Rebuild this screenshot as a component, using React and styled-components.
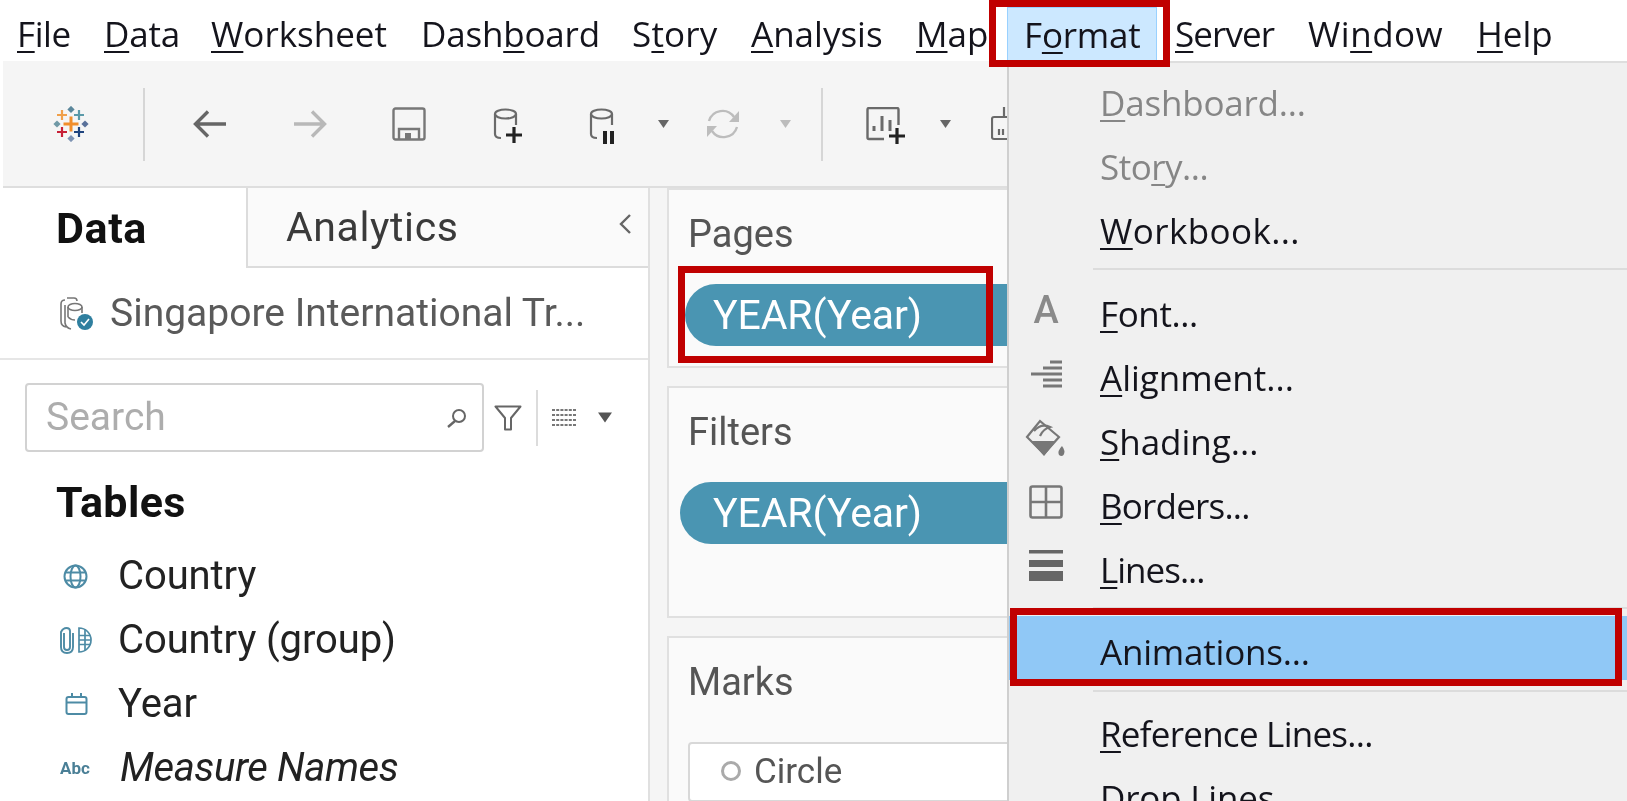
import React from "react";
import styled, { createGlobalStyle } from "styled-components";

const Global = createGlobalStyle`
  html, body { margin: 0; padding: 0; background: #fff; }
  body { font-family: Roboto, "Liberation Sans", sans-serif; }
`;

const UI = `"Open Sans", "Noto Sans", sans-serif`;
const BOOK = `Roboto, "Liberation Sans", sans-serif`;

const Page = styled.div`
  position: relative; width: 1627px; height: 801px; overflow: hidden; background: #fff;
  filter: blur(0.5px);
`;
const MenuBar = styled.div`
  display: flex; height: 61px; padding-left: 17px; align-items: flex-start;
`;
const MenuItem = styled.div`
  flex: none; width: ${p => p.$w}px; height: 61px; letter-spacing: ${p => p.$ls ?? 0}px;
  font: 400 35px/67px ${UI}; color: #14141c; white-space: nowrap;
`;
const ActiveMenuItem = styled.div`
  flex: none; width: 150px; height: 53px; margin: 7px 18px 0 0; padding-left: 16px; box-sizing: border-box;
  background: #cce8ff; border: 1px solid #99d1ff; border-bottom: none; letter-spacing: -0.2px;
  font: 400 35px/53px ${UI}; color: #14141c; white-space: nowrap;
`;
const Key = styled.span`
  text-decoration: underline; text-decoration-thickness: 2px; text-underline-offset: 4px;
`;
const Toolbar = styled.div`
  display: flex; align-items: center; height: 125px; margin-left: 3px;
  background: #f5f5f5; border-bottom: 2px solid #dedede;
`;
const Tool = styled.div`
  flex: none; display: flex; margin-left: ${p => p.$gap}px; margin-top: ${p => p.$dy ?? 0}px;
`;
const ToolSep = styled.div`
  flex: none; width: 2px; height: 73px; margin-top: 2px; background: #d6d6d6; margin-left: ${p => p.$gap}px;
`;
const Workspace = styled.div`
  display: flex; height: 614px; background: #f5f5f5;
`;
const LeftPanel = styled.div`
  flex: none; width: 648px; background: #fff; border-right: 2px solid #e0e0e0; display: flex; flex-direction: column;
`;
const Tabs = styled.div`
  display: flex; height: 80px; flex: none;
`;
const DataTab = styled.div`
  flex: none; width: 246px; box-sizing: border-box; padding-left: 56px;
  font: 700 43px/80px ${BOOK}; letter-spacing: 0.6px; color: #111; background: #fff;
`;
const AnalyticsTab = styled.div`
  flex: 1; display: flex; align-items: center; justify-content: space-between; box-sizing: border-box;
  padding: 0 17px 0 38px; background: #fafafa; border-left: 2px solid #dcdcdc; border-bottom: 2px solid #dcdcdc;
  font: 400 41px/78px ${BOOK}; letter-spacing: 0.6px; color: #3a3a3a;
`;
const AnalyticsChevron = styled.div`
  display: flex; margin-top: -6px;
`;
const SourceRow = styled.div`
  flex: none; height: 92px; box-sizing: border-box; padding: 0 0 0 59px; display: flex; align-items: center; gap: 17px;
  border-bottom: 2px solid #e6e6e6; font: 400 39px/1 ${BOOK}; color: #5a5a5a; white-space: nowrap;
`;
const SearchRow = styled.div`
  flex: none; display: flex; align-items: center; padding: 23px 0 0 25px;
`;
const SearchBox = styled.div`
  flex: none; width: 459px; height: 69px; box-sizing: border-box; border: 2px solid #d2d2d2; border-radius: 4px;
  display: flex; align-items: center; justify-content: space-between; padding: 0 15px 0 19px;
  font: 400 39px/1 ${BOOK}; color: #adadad; background: #fff;
`;
const RowIcon = styled.div`
  flex: none; display: flex; margin-left: ${p => p.$gap}px;
`;
const VSep = styled.div`
  flex: none; width: 2px; height: 56px; background: #dcdcdc; margin-left: 14px;
`;
const TablesTitle = styled.div`
  margin: 23px 0 0 56px; font: 700 43px/54px ${BOOK}; letter-spacing: 0.4px; color: #111;
`;
const Fields = styled.div`
  display: flex; flex-direction: column; margin-top: 15px;
`;
const Field = styled.div`
  display: flex; align-items: center; height: 64px; padding-left: 59px;
  font: ${p => (p.$em ? "italic " : "")}400 40px/64px ${BOOK}; letter-spacing: ${p => (p.$em ? -0.4 : -0.1)}px; color: #222; white-space: nowrap;
`;
const FieldIcon = styled.div`
  flex: none; width: ${p => p.$w ?? 59}px; display: flex; padding-left: ${p => p.$pad ?? 0}px; box-sizing: border-box;
  letter-spacing: 0;
`;
const AbcMark = styled.span`
  font: 700 17px/1 ${BOOK}; color: #4a7f96;
`;
const PanelFoot = styled.div`
  margin: 3px 0 0 45px; height: 3px; background: #e4e4e4;
`;
const ShelfColumn = styled.div`
  flex: 1; display: flex; flex-direction: column; gap: 18px; padding-left: 17px; overflow: hidden;
`;
const Card = styled.div`
  flex: none; height: ${p => p.$h}px; width: 500px; box-sizing: border-box; background: #fafafa;
  border: 2px solid #e0e0e0; padding-left: 19px;
`;
const CardTitle = styled.div`
  font: 400 38px/1 ${BOOK}; color: #555; padding-top: ${p => p.$top}px;
`;
const Pill = styled.div`
  width: 420px; height: 62px; margin: ${p => p.$mt}px 0 0 ${p => p.$ml}px; border-radius: 31px 0 0 31px;
  background: #4a95b2; color: #fff; box-sizing: border-box; padding-left: ${p => 25 - p.$ml}px;
  font: 400 41px/62px ${BOOK}; letter-spacing: -0.1px;
`;
const MarkSelect = styled.div`
  display: flex; align-items: center; gap: 13px; width: 400px; height: 60px; margin-top: 41px; box-sizing: border-box;
  border: 2px solid #d8d8d8; border-radius: 4px; padding: 0 0 2px 31px; background: #fff;
  font: 400 35px/1 ${BOOK}; color: #555;
`;
const CircleMark = styled.span`
  width: 14px; height: 14px; border: 3px solid #aaa; border-radius: 50%; flex: none;
`;

const Menu = styled.div`
  position: absolute; left: 1007px; top: 61px; right: 0; bottom: 0; background: #f0f0f0; box-sizing: border-box;
  border-left: 2px solid #cfcfcf; border-top: 2px solid #dedede; padding-top: 4px;
`;
const Item = styled.div`
  display: flex; height: 64px; box-sizing: border-box; padding-top: 7px; align-items: center; font: 400 35px/57px ${UI};
  letter-spacing: ${p => p.$ls ?? 0}px;
  color: ${p => (p.$off ? "#868686" : "#14141c")};
  background: ${p => (p.$on ? "#90c8f6" : "transparent")};
  white-space: nowrap;
`;
const ItemIcon = styled.div`
  flex: none; width: 91px; margin-top: -7px; display: flex; justify-content: center; padding-right: 17px; box-sizing: border-box;
`;
const AGlyph = styled.span`
  font: 500 38px/1 ${BOOK}; color: #8a8a8a;
`;
const MenuSep = styled.div`
  height: 2px; margin: ${p => p.$t}px 0 ${p => p.$b}px 84px; background: #dcdcdc;
`;
const RedBox = styled.div`
  position: absolute; box-sizing: border-box; border: 7px solid #c00000; pointer-events: none;
  left: ${p => p.$l}px; top: ${p => p.$t}px; width: ${p => p.$w}px; height: ${p => p.$h}px;
`;

const Plus = ({ x, y, s, c, w = 3 }) => (
  <path d={`M${x - s} ${y}H${x + s}M${x} ${y - s}V${y + s}`} stroke={c} strokeWidth={w} fill="none" />
);
const Diamond = ({ x, y, c }) => <path d={`M${x} ${y - 3.6}L${x + 3.6} ${y}L${x} ${y + 3.6}L${x - 3.6} ${y}Z`} fill={c} />;
const Logo = () => (
  <svg width="36" height="36" viewBox="0 0 36 36">
    <Plus x={18} y={18} s={7.5} c="#f28e2b" w={3} />
    <Plus x={9} y={9} s={5} c="#f0a04b" w={2.2} />
    <Plus x={26} y={9} s={5} c="#5b9aa9" w={2.2} />
    <Plus x={9} y={26} s={5} c="#c72037" w={2.2} />
    <Plus x={26} y={26} s={5} c="#1f447e" w={2.2} />
    <Diamond x={18} y={3.5} c="#5b879b" />
    <Diamond x={4} y={18} c="#7099a6" />
    <Diamond x={32} y={18} c="#59719a" />
    <Diamond x={18} y={32.5} c="#7e93b3" />
  </svg>
);
const Arrow = ({ c, flip }) => (
  <svg width="34" height="30" viewBox="0 0 34 30" style={flip ? { transform: "scaleX(-1)" } : undefined}>
    <path d="M33 15H3M15 2.5 2.5 15 15 27.5" fill="none" stroke={c} strokeWidth="3.4" />
  </svg>
);
const Save = () => (
  <svg width="34" height="34" viewBox="0 0 34 34" fill="none" stroke="#777" strokeWidth="2.4">
    <rect x="1.5" y="1.5" width="31" height="31" rx="2" />
    <path d="M7 32V22H27V32" />
    <rect x="13" y="26" width="6" height="6" fill="#777" stroke="none" />
  </svg>
);
const Cyl = ({ children }) => (
  <svg width="32" height="36" viewBox="0 0 32 36" fill="none">
    <g stroke="#6a6a6a" strokeWidth="2.2">
      <ellipse cx="12.5" cy="6" rx="10.5" ry="4.5" />
      <path d="M2 6V26Q2 30 8 30M23 6V17" />
    </g>
    {children}
  </svg>
);
const DropArrow = ({ c = "#666", s = 10 }) => (
  <svg width={s + 1} height={s - 2} viewBox="0 0 11 8"><path d="M0 0H11L5.5 8Z" fill={c} /></svg>
);
const Sync = () => (
  <svg width="36" height="32" viewBox="0 0 36 32" fill="none" stroke="#bdbdbd" strokeWidth="2.4">
    <path d="M4 13A14 14 0 0 1 29 9M32 19A14 14 0 0 1 7 23" />
    <path d="M34 3V14H24Z" fill="#bdbdbd" stroke="none" />
    <path d="M2 29V18H12Z" fill="#bdbdbd" stroke="none" />
  </svg>
);
const ChartPlus = () => (
  <svg width="40" height="38" viewBox="0 0 40 38" fill="none">
    <path d="M18 32H3Q1.5 32 1.5 30.5V2.5Q1.5 1 3 1H31Q32.5 1 32.5 2.500V18" stroke="#6a6a6a" strokeWidth="2.4" />
    <path d="M8 24V19M16 24V9M24 24V13" stroke="#6a6a6a" strokeWidth="3" />
    <Plus x={31} y={29} s={8} c="#222" w={3.2} />
  </svg>
);
const NextTool = () => (
  <svg width="40" height="34" viewBox="0 0 40 34" fill="none" stroke="#6a6a6a" strokeWidth="2.2">
    <path d="M13 10V0" />
    <path d="M36 10H3Q1 10 1 12V30Q1 32 3 32H36" />
    <path d="M8 22V28M12 22V28" />
  </svg>
);
const SourceIcon = () => (
  <svg width="34" height="33" viewBox="0 0 34 33" fill="none">
    <g stroke="#777" strokeWidth="1.6">
      <path d="M8 1H15Q18 1 18 4M6 3Q2 3 2 7V24Q2 29 7 30M12 32Q7 31 6 26V8" />
      <ellipse cx="16" cy="10" rx="7" ry="3.5" />
      <path d="M9 10V20M23 10V16M9 20Q12 23 16 23" />
    </g>
    <circle cx="26" cy="25" r="8" fill="#2f7f9f" />
    <path d="M22 25 25 28 30 22" stroke="#fff" strokeWidth="1.6" fill="none" />
  </svg>
);
const Globe = ({ s = 25 }) => (
  <svg width={s} height={s} viewBox="0 0 25 25" fill="none" stroke="#4d8ba5" strokeWidth="2">
    <circle cx="12.500" cy="12.500" r="11" />
    <ellipse cx="12.500" cy="12.500" rx="5" ry="11" />
    <path d="M2 8.500H23M2 16.500H23" />
  </svg>
);
const GroupGlobe = () => (
  <svg width="34" height="28" viewBox="0 0 34 28" fill="none" stroke="#4d8ba5" strokeWidth="1.9">
    <path d="M5 7V21Q5 24 8 24T11 21V5Q11 2 7.500 2T2 6V21Q2 27 8 27T14 21V7" />
    <g strokeWidth="1.7">
      <path d="M20 2A12 12 0 0 1 20 26Z" />
      <path d="M20 9.500H31M20 14H32M20 18.500H31M26 3.500V24.500" />
    </g>
  </svg>
);
const Calendar = () => (
  <svg width="23" height="22" viewBox="0 0 23 22" fill="none" stroke="#4d8ba5" strokeWidth="2">
    <rect x="1.500" y="4" width="20" height="17" rx="2" />
    <path d="M1.500 9.500H21.500M7 0V5M16 0V5" />
  </svg>
);
const Magnifier = () => (
  <svg width="20" height="20" viewBox="0 0 20 20" fill="none" stroke="#666" strokeWidth="2">
    <circle cx="12" cy="8" r="6" />
    <path d="M8 13 1 19" strokeWidth="2.4" />
  </svg>
);
const Funnel = () => (
  <svg width="28" height="26" viewBox="0 0 28 26" fill="none" stroke="#666" strokeWidth="2">
    <path d="M1.500 1.500H26.500L17 13V24.500H11V13Z" strokeLinejoin="round" />
  </svg>
);
const GridIcon = () => (
  <svg width="25" height="20" viewBox="0 0 25 20" fill="none" stroke="#777" strokeWidth="1.8" strokeDasharray="3 1.200">
    <path d="M0 2H25M0 7H25M0 12H25M0 17H25" />
  </svg>
);
const Chevron = () => (
  <svg width="12" height="20" viewBox="0 0 12 20" fill="none" stroke="#666" strokeWidth="2.4">
    <path d="M11 1 2 10 11 19" />
  </svg>
);
const AlignIcon = () => (
  <svg width="31" height="28" viewBox="0 0 31 28" fill="none" stroke="#777" strokeWidth="2.8">
    <path d="M19 2H31M12 8H31M0 14H31M12 20H31M12 26H31" />
  </svg>
);
const BucketIcon = () => (
  <svg width="42" height="38" viewBox="0 0 42 38" fill="none" stroke="#777" strokeWidth="2.2">
    <path d="M2 18 15 2 34 18 19 35Z" />
    <path d="M9 12Q16 4 25 8Q18 10 15 17" />
    <path d="M6 22H31L19 37Z" fill="#777" stroke="none" />
    <path d="M37 27Q41 32 38.500 36Q36.500 38 34 36Q32 32 37 27Z" fill="#777" stroke="none" />
  </svg>
);
const BorderIcon = () => (
  <svg width="34" height="34" viewBox="0 0 34 34" fill="none" stroke="#777" strokeWidth="2.6">
    <rect x="1.500" y="1.500" width="31" height="31" rx="2" />
    <path d="M17 2V32M2 17H32" />
  </svg>
);
const LinesIcon = () => (
  <svg width="34" height="32" viewBox="0 0 34 32">
    <rect y="0" width="34" height="3.500" fill="#666" />
    <rect y="10" width="34" height="7" fill="#666" />
    <rect y="21" width="34" height="10" fill="#666" />
  </svg>
);

export default function App() {
  return (
    <Page>
      <Global />
      <MenuBar>
        <MenuItem $w={87} $ls={-0.4}><Key>F</Key>ile</MenuItem>
        <MenuItem $w={107} $ls={-0.2}><Key>D</Key>ata</MenuItem>
        <MenuItem $w={210}><Key>W</Key>orksheet</MenuItem>
        <MenuItem $w={211} $ls={-0.2}>Dash<Key>b</Key>oard</MenuItem>
        <MenuItem $w={119} $ls={0.2}>S<Key>t</Key>ory</MenuItem>
        <MenuItem $w={165}><Key>A</Key>nalysis</MenuItem>
        <MenuItem $w={91}><Key>M</Key>ap</MenuItem>
        <ActiveMenuItem>F<Key>o</Key>rmat</ActiveMenuItem>
        <MenuItem $w={133} $ls={-0.9}><Key>S</Key>erver</MenuItem>
        <MenuItem $w={169} $ls={0.5}>Wi<Key>n</Key>dow</MenuItem>
        <MenuItem $w={80}><Key>H</Key>elp</MenuItem>
      </MenuBar>
      <Toolbar>
        <Tool $gap={50}><Logo /></Tool>
        <ToolSep $gap={54} />
        <Tool $gap={48}><Arrow c="#666" /></Tool>
        <Tool $gap={66}><Arrow c="#b8b8b8" flip /></Tool>
        <Tool $gap={65}><Save /></Tool>
        <Tool $gap={67} $dy={5}><Cyl><Plus x={21} y={27} s={8} c="#222" w={3.2} /></Cyl></Tool>
        <Tool $gap={64} $dy={5}><Cyl><path d="M16 23V36M23 23V36" stroke="#222" strokeWidth="4" /></Cyl></Tool>
        <Tool $gap={37}><DropArrow /></Tool>
        <Tool $gap={36}><Sync /></Tool>
        <Tool $gap={39}><DropArrow c="#bcbcbc" /></Tool>
        <ToolSep $gap={30} />
        <Tool $gap={43} $dy={4}><ChartPlus /></Tool>
        <Tool $gap={34}><DropArrow /></Tool>
        <Tool $gap={40}><NextTool /></Tool>
      </Toolbar>
      <Workspace>
        <LeftPanel>
          <Tabs>
            <DataTab>Data</DataTab>
            <AnalyticsTab>Analytics<AnalyticsChevron><Chevron /></AnalyticsChevron></AnalyticsTab>
          </Tabs>
          <SourceRow><SourceIcon />Singapore International Tr...</SourceRow>
          <SearchRow>
            <SearchBox>Search<Magnifier /></SearchBox>
            <RowIcon $gap={10}><Funnel /></RowIcon>
            <VSep />
            <RowIcon $gap={14}><GridIcon /></RowIcon>
            <RowIcon $gap={21}><DropArrow c="#555" s={13} /></RowIcon>
          </SearchRow>
          <TablesTitle>Tables</TablesTitle>
          <Fields>
            <Field><FieldIcon $pad={4}><Globe /></FieldIcon>Country</Field>
            <Field><FieldIcon><GroupGlobe /></FieldIcon>Country (group)</Field>
            <Field><FieldIcon $pad={6}><Calendar /></FieldIcon>Year</Field>
            <Field $em><FieldIcon $pad={1} $w={61}><AbcMark>Abc</AbcMark></FieldIcon>Measure Names</Field>
          </Fields>
          <PanelFoot />
        </LeftPanel>
        <ShelfColumn>
          <Card $h={180}>
            <CardTitle $top={25}>Pages</CardTitle>
            <Pill $mt={31} $ml={-3}>YEAR(Year)</Pill>
          </Card>
          <Card $h={232}>
            <CardTitle $top={25}>Filters</CardTitle>
            <Pill $mt={31} $ml={-8}>YEAR(Year)</Pill>
          </Card>
          <Card $h={300}>
            <CardTitle $top={25}>Marks</CardTitle>
            <MarkSelect><CircleMark />Circle</MarkSelect>
          </Card>
        </ShelfColumn>
      </Workspace>
      <Menu>
        <Item $off $ls={-0.2}><ItemIcon /><Key>D</Key>ashboard...</Item>
        <Item $off $ls={-0.5}><ItemIcon />Sto<Key>r</Key>y...</Item>
        <Item $ls={0.4}><ItemIcon /><Key>W</Key>orkbook...</Item>
        <MenuSep $t={9} $b={8} />
        <Item $ls={-0.4}><ItemIcon><AGlyph>A</AGlyph></ItemIcon><Key>F</Key>ont...</Item>
        <Item><ItemIcon><AlignIcon /></ItemIcon><Key>A</Key>lignment...</Item>
        <Item><ItemIcon><BucketIcon /></ItemIcon><Key>S</Key>hading...</Item>
        <Item $ls={-0.8}><ItemIcon><BorderIcon /></ItemIcon><Key>B</Key>orders...</Item>
        <Item $ls={-1}><ItemIcon><LinesIcon /></ItemIcon><Key>L</Key>ines...</Item>
        <MenuSep $t={9} $b={7} />
        <Item $on $ls={-0.2}><ItemIcon />Animations...</Item>
        <MenuSep $t={10} $b={6} />
        <Item $ls={-0.75}><ItemIcon /><Key>R</Key>eference Lines...</Item>
        <Item $ls={-0.2}><ItemIcon />Drop Lines...</Item>
      </Menu>
      <RedBox $l={989} $t={0} $w={181} $h={67} />
      <RedBox $l={678} $t={266} $w={315} $h={97} />
      <RedBox $l={1010} $t={608} $w={612} $h={78} />
    </Page>
  );
}
